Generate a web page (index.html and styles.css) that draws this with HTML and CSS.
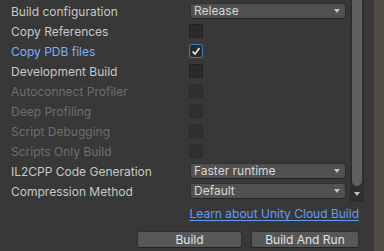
FILE: index.html
```html
<!DOCTYPE html>
<html lang="en">
<head>
  <meta charset="UTF-8" />
  <title>Build Settings</title>
  <link rel="stylesheet" href="styles.css">
</head>
<body>
  <div class="window">
    <div class="panel">
      <div class="scroll">
        <div class="rows">
          <div class="row">
            <span class="label">Build configuration</span>
            <div class="dropdown">Release<span class="arrow"></span></div>
          </div>
          <div class="row">
            <span class="label">Copy References</span>
            <span class="check"></span>
          </div>
          <div class="row">
            <span class="label focus">Copy PDB files</span>
            <span class="check on">
              <svg width="12" height="12" viewBox="0 0 12 12"><polyline points="2.5,6.5 5,9 9.5,3" fill="none" stroke="#eeeeee" stroke-width="1.6"/></svg>
            </span>
          </div>
          <div class="row">
            <span class="label">Development Build</span>
            <span class="check"></span>
          </div>
          <div class="row">
            <span class="label off">Autoconnect Profiler</span>
            <span class="check dis"></span>
          </div>
          <div class="row">
            <span class="label off">Deep Profiling</span>
            <span class="check dis"></span>
          </div>
          <div class="row">
            <span class="label off">Script Debugging</span>
            <span class="check dis"></span>
          </div>
          <div class="row">
            <span class="label off">Scripts Only Build</span>
            <span class="check dis"></span>
          </div>
          <div class="row">
            <span class="label">IL2CPP Code Generation</span>
            <div class="dropdown">Faster runtime<span class="arrow"></span></div>
          </div>
          <div class="row">
            <span class="label">Compression Method</span>
            <div class="dropdown">Default<span class="arrow"></span></div>
          </div>
        </div>
        <div class="scrollbar">
          <div class="thumb"></div>
          <div class="down"></div>
        </div>
      </div>
      <div class="footer">
        <a class="link" href="#">Learn about Unity Cloud Build</a>
        <div class="buttons">
          <button class="btn build">Build</button>
          <button class="btn run">Build And Run</button>
        </div>
      </div>
    </div>
    <div class="edge"></div>
  </div>
</body>
</html>
```

FILE: styles.css
```css
body {
  margin: 0;
  background: #383838;
  font-family: Inter, "Liberation Sans", sans-serif;
  font-size: 12px;
  color: #c8c8c8;
}
.window {
  display: flex;
  width: 384px;
  height: 251px;
  overflow: hidden;
}
.panel {
  width: 374px;
  background: #383838;
  display: flex;
  flex-direction: column;
}
.edge {
  width: 10px;
  background: #514b45;
}
.scroll {
  display: flex;
  height: 202px;
}
.rows {
  width: 350px;
  padding-top: 1px;
}
.row {
  display: flex;
  align-items: center;
  height: 20px;
}
.label {
  width: 178px;
  padding-left: 11px;
  white-space: nowrap;
}
.label.focus {
  color: #7baefa;
}
.label.off {
  color: #6e6e6e;
}
.check {
  width: 12px;
  height: 12px;
  border: 1px solid #222222;
  border-radius: 2px;
  background: #2a2a2a;
  display: flex;
  align-items: center;
  justify-content: center;
}
.check.dis {
  background: #303030;
  border-color: #2b2b2b;
}
.check.on {
  border-color: #3a79bb;
  background: #2a2a2a;
}
.dropdown {
  position: relative;
  margin-left: 1px;
  width: 150px;
  height: 14px;
  line-height: 14px;
  padding-left: 3px;
  padding-right: 1px;
  border: 1px solid #303030;
  border-bottom-color: #242424;
  border-radius: 3px;
  background: #515151;
  color: #d6d6d6;
}
.arrow {
  position: absolute;
  right: 5px;
  top: 5px;
  width: 0;
  height: 0;
  border-left: 3.5px solid transparent;
  border-right: 3.5px solid transparent;
  border-top: 4px solid #c4c4c4;
}
.scrollbar {
  width: 14px;
  background: #2e2e2e;
  display: flex;
  flex-direction: column;
  align-items: center;
}
.thumb {
  width: 10px;
  height: 186px;
  background: #5f5f5f;
  border-radius: 0 0 5px 5px;
}
.down {
  margin-top: 6px;
  width: 0;
  height: 0;
  border-left: 3.5px solid transparent;
  border-right: 3.5px solid transparent;
  border-top: 4px solid #c4c4c4;
}
.footer {
  display: flex;
  flex-direction: column;
  align-items: flex-end;
  padding: 4px 15px 0 0;
}
.link {
  height: 16px;
  line-height: 16px;
  color: #5f9cf7;
  text-decoration: underline;
  text-underline-offset: 2px;
}
.buttons {
  display: flex;
  gap: 9px;
  margin-top: 9px;
}
.btn {
  height: 17px;
  padding: 0;
  border: 1px solid #303030;
  border-bottom-color: #242424;
  border-radius: 3px;
  background: #585858;
  color: #e2e2e2;
  font-family: Inter, "Liberation Sans", sans-serif;
  font-size: 12px;
  line-height: 15px;
}
.btn.build {
  width: 105px;
}
.btn.run {
  width: 108px;
}
```
